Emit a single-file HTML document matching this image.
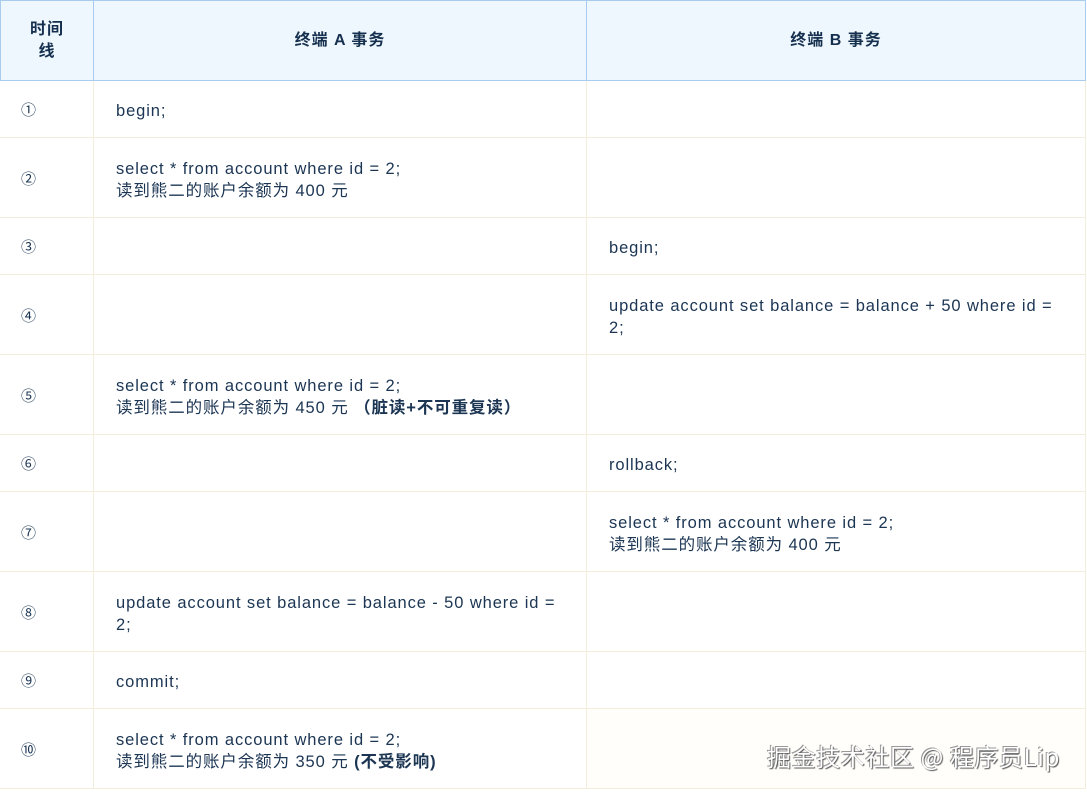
<!DOCTYPE html>
<html><head><meta charset="utf-8"><style>
*{margin:0;padding:0;box-sizing:border-box}
body{width:1087px;height:793px;background:#fff;font-family:"Liberation Sans","Noto Sans CJK SC",sans-serif;color:#1b3553;position:relative;overflow:hidden}
.c{position:absolute;display:flex;align-items:center;font-size:16.5px;line-height:22px;letter-spacing:0.9px;border-right:1px solid #f2eedb;border-bottom:1px solid #f2eedb;padding-top:4px}
.h{background:#eff7fe;border-right:1px solid #a8cbee;border-bottom:1px solid #a8cbee;justify-content:center;font-weight:bold;font-size:16px;letter-spacing:1px;text-align:center;color:#15304e;padding-top:0}
.n{justify-content:flex-start;padding-left:21px;font-size:15px;letter-spacing:0}
.t{padding-left:22px}
b{font-weight:bold}
.wm{position:absolute;left:767px;top:738px;font-size:24px;letter-spacing:0.6px;color:#fff;text-shadow:1px 1px 1px #555,-1px -1px 0 #999;font-family:"Noto Sans CJK SC",sans-serif}
</style></head><body>
<div class="c h" style="left:0;top:0;width:94px;height:81px;border-left:1px solid #a8cbee;border-top:1px solid #a8cbee">时间<br>线</div>
<div class="c h" style="left:94px;top:0;width:493px;height:81px;border-top:1px solid #a8cbee">终端 A 事务</div>
<div class="c h" style="left:587px;top:0;width:499px;height:81px;border-top:1px solid #a8cbee">终端 B 事务</div>

<div class="c n" style="left:0;top:81px;width:94px;height:57px">①</div>
<div class="c t" style="left:94px;top:81px;width:493px;height:57px">begin;</div>
<div class="c t" style="left:587px;top:81px;width:499px;height:57px"></div>

<div class="c n" style="left:0;top:138px;width:94px;height:80px">②</div>
<div class="c t" style="left:94px;top:138px;width:493px;height:80px">select * from account where id = 2;<br>读到熊二的账户余额为 400 元</div>
<div class="c t" style="left:587px;top:138px;width:499px;height:80px"></div>

<div class="c n" style="left:0;top:218px;width:94px;height:57px">③</div>
<div class="c t" style="left:94px;top:218px;width:493px;height:57px"></div>
<div class="c t" style="left:587px;top:218px;width:499px;height:57px">begin;</div>

<div class="c n" style="left:0;top:275px;width:94px;height:80px">④</div>
<div class="c t" style="left:94px;top:275px;width:493px;height:80px"></div>
<div class="c t" style="left:587px;top:275px;width:499px;height:80px">update account set balance = balance + 50 where id =<br>2;</div>

<div class="c n" style="left:0;top:355px;width:94px;height:80px">⑤</div>
<div class="c t" style="left:94px;top:355px;width:493px;height:80px"><span>select * from account where id = 2;<br>读到熊二的账户余额为 450 元 <b>（脏读+不可重复读）</b></span></div>
<div class="c t" style="left:587px;top:355px;width:499px;height:80px"></div>

<div class="c n" style="left:0;top:435px;width:94px;height:57px">⑥</div>
<div class="c t" style="left:94px;top:435px;width:493px;height:57px"></div>
<div class="c t" style="left:587px;top:435px;width:499px;height:57px">rollback;</div>

<div class="c n" style="left:0;top:492px;width:94px;height:80px">⑦</div>
<div class="c t" style="left:94px;top:492px;width:493px;height:80px"></div>
<div class="c t" style="left:587px;top:492px;width:499px;height:80px">select * from account where id = 2;<br>读到熊二的账户余额为 400 元</div>

<div class="c n" style="left:0;top:572px;width:94px;height:80px">⑧</div>
<div class="c t" style="left:94px;top:572px;width:493px;height:80px">update account set balance = balance - 50 where id =<br>2;</div>
<div class="c t" style="left:587px;top:572px;width:499px;height:80px"></div>

<div class="c n" style="left:0;top:652px;width:94px;height:57px">⑨</div>
<div class="c t" style="left:94px;top:652px;width:493px;height:57px">commit;</div>
<div class="c t" style="left:587px;top:652px;width:499px;height:57px"></div>

<div class="c n" style="left:0;top:709px;width:94px;height:80px">⑩</div>
<div class="c t" style="left:94px;top:709px;width:493px;height:80px"><span>select * from account where id = 2;<br>读到熊二的账户余额为 350 元 <b>(不受影响)</b></span></div>
<div class="c t" style="left:587px;top:709px;width:499px;height:80px;background:#fffefa"></div>
<div class="wm">掘金技术社区 @ 程序员Lip</div>
</body></html>
